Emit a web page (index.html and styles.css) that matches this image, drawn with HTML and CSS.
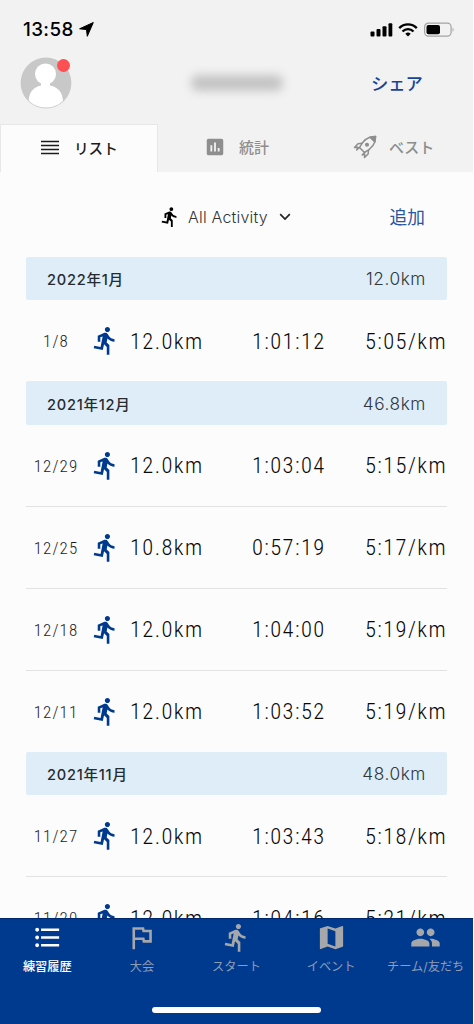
FILE: index.html
```html
<!DOCTYPE html>
<html lang="ja">
<head>
<meta charset="utf-8">
<title>練習履歴</title>
<link rel="stylesheet" href="styles.css">
</head>
<body>
<svg class="defs" width="0" height="0">
  <symbol id="run" viewBox="0 0 24 24"><path d="M13.49 5.48c1.1 0 2-.9 2-2s-.9-2-2-2-2 .9-2 2 .9 2 2 2zm-3.6 13.9l1-4.4 2.1 2v6h2v-7.5l-2.1-2 .6-3c1.3 1.5 3.3 2.5 5.5 2.5v-2c-1.9 0-3.5-1-4.3-2.4l-1-1.6c-.4-.6-1-1-1.7-1-.3 0-.5.1-.8.1l-5.2 2.2v4.7h2v-3.4l1.8-.7-1.6 8.1-4.9-1-.4 2 7 1.4z"/></symbol>
</svg>
<div class="app">
  <header class="top">
    <div class="status">
      <span class="time">13:58</span>
      <svg class="loc" width="15" height="15" viewBox="0 0 15 15"><path d="M14.3.5 8.3 14.3 7.5 7.6.6 6.8z" fill="#000" stroke="#000" stroke-linejoin="round"/></svg>
      <svg class="signal" width="86" height="16" viewBox="0 0 86 16">
        <rect x=".5" y="9.5" width="4" height="5" rx="1"/><rect x="6.5" y="7" width="4" height="7.500" rx="1"/><rect x="12.500" y="4.200" width="4" height="10.300" rx="1"/><rect x="18.500" y="1.200" width="3.800" height="13.300" rx="1"/>
        <g fill="none" stroke="#000" stroke-width="2.300"><path d="M29.200 6.100a12.300 12.300 0 0 1 17.600 0"/><path d="M32.500 9.500a7.700 7.700 0 0 1 11 0"/></g>
        <path d="M38 14.500l-2.700-2.800a3.900 3.900 0 0 1 5.400 0z"/>
        <rect x="54.600" y="1.100" width="26.500" height="13" rx="3.800" fill="none" stroke="#a3a3a3" stroke-width="1.200"/><rect x="56.500" y="3" width="13.500" height="9.200" rx="2"/><path d="M82.600 5.500q2 2.200 0 4.400z" fill="#a3a3a3"/>
      </svg>
    </div>
    <div class="profile">
      <div class="avatar">
        <svg width="52" height="52" viewBox="0 0 52 52"><defs><clipPath id="disc"><circle cx="26" cy="26" r="24.600"/></clipPath></defs><circle cx="26" cy="26" r="25.400" fill="#c8c8c8"/><g fill="#fff" clip-path="url(#disc)"><circle cx="25.500" cy="17" r="10.500"/><path d="M21 25h9v3.500q12.500 2.500 13 16V52H8.500v-7.500q.5-13.500 12.500-16z"/></g></svg>
        <i class="dot"></i>
      </div>
      <span class="name"></span>
      <a class="share">シェア</a>
    </div>
    <nav class="tabs">
      <a class="tab active"><svg width="18" height="15" viewBox="0 0 18 15"><path d="M0 1.500h18M0 5.500h18M0 9.500h18M0 13.500h18" stroke="#1c1c1c" stroke-width="1.600"/></svg><span>リスト</span></a>
      <a class="tab stats"><svg width="22" height="22" viewBox="0 0 24 24" fill="#8e8e8e"><path d="M19 3H5c-1.100 0-2 .9-2 2v14c0 1.100.9 2 2 2h14c1.100 0 2-.9 2-2V5c0-1.100-.9-2-2-2zM9 17H7v-7h2v7zm4 0h-2V7h2v10zm4 0h-2v-4h2v4z"/></svg><span>統計</span></a>
      <a class="tab best"><svg width="24" height="24" viewBox="0 0 24 24" fill="none" stroke="#8e8e8e" stroke-width="1.500" stroke-linejoin="round" stroke-linecap="round"><path d="M22.500 1.500c.4 6-2.500 11.500-11 16L6.500 12.500C10.500 4.500 16.500 1 22.500 1.500z"/><path d="M17 2.200 21.800 7l.7-5.500z" fill="#8e8e8e"/><circle cx="14" cy="9.800" r="1.300" fill="#8e8e8e"/><path d="M9 8.300 5 8.700 1.500 12.500l3.500-.3-1.300 2.800 2.800-2.500M15.500 15l-.4 4-3.600 3.500.2-3.500-2.500 1 2.300-2.500"/></svg><span>ベスト</span></a>
    </nav>
  </header>
  <main class="content">
    <div class="filter">
      <svg class="small-run" width="22" height="22"><use href="#run"/></svg>
      <span class="activity">All Activity</span>
      <svg class="chevron" width="12" height="8" viewBox="0 0 12 8"><path d="M1.200 1.200 6 6l4.800-4.800" fill="none" stroke="#222" stroke-width="1.700"/></svg>
      <a class="add">追加</a>
    </div>
    <section>
      <h2 class="month"><span>2022年1月</span><b>12.0km</b></h2>
      <div class="row"><span class="date">1/8</span><svg class="runner"><use href="#run"/></svg><span class="val">12.0km</span><span class="val">1:01:12</span><span class="val">5:05/km</span></div>
    </section>
    <section>
      <h2 class="month"><span>2021年12月</span><b>46.8km</b></h2>
      <div class="row"><span class="date">12/29</span><svg class="runner"><use href="#run"/></svg><span class="val">12.0km</span><span class="val">1:03:04</span><span class="val">5:15/km</span></div>
      <div class="row"><span class="date">12/25</span><svg class="runner"><use href="#run"/></svg><span class="val">10.8km</span><span class="val">0:57:19</span><span class="val">5:17/km</span></div>
      <div class="row"><span class="date">12/18</span><svg class="runner"><use href="#run"/></svg><span class="val">12.0km</span><span class="val">1:04:00</span><span class="val">5:19/km</span></div>
      <div class="row"><span class="date">12/11</span><svg class="runner"><use href="#run"/></svg><span class="val">12.0km</span><span class="val">1:03:52</span><span class="val">5:19/km</span></div>
    </section>
    <section>
      <h2 class="month"><span>2021年11月</span><b>48.0km</b></h2>
      <div class="row"><span class="date">11/27</span><svg class="runner"><use href="#run"/></svg><span class="val">12.0km</span><span class="val">1:03:43</span><span class="val">5:18/km</span></div>
      <div class="row"><span class="date">11/20</span><svg class="runner"><use href="#run"/></svg><span class="val">12.0km</span><span class="val">1:04:16</span><span class="val">5:21/km</span></div>
    </section>
  </main>
  <footer class="bottom">
    <nav class="nav">
      <a class="item on"><svg viewBox="0 0 24 24"><path d="M4 10.500c-.83 0-1.500.67-1.500 1.500s.67 1.500 1.500 1.500 1.500-.67 1.500-1.500-.67-1.500-1.500-1.500zm0-6c-.83 0-1.500.67-1.500 1.500S3.170 7.500 4 7.500 5.500 6.830 5.500 6 4.830 4.500 4 4.500zm0 12c-.83 0-1.500.68-1.500 1.500s.68 1.500 1.500 1.500 1.500-.68 1.500-1.500-.67-1.500-1.500-1.500zM7 19h14v-2H7v2zm0-6h14v-2H7v2zm0-8v2h14V5H7z"/></svg><span>練習履歴</span></a>
      <a class="item"><svg viewBox="0 0 24 24"><path d="M12.360 6l.4 2H18v6h-3.360l-.4-2H7V6h5.360M14 4H5v17h2v-7h5.600l.4 2h7V6h-5.600L14 4z"/></svg><span>大会</span></a>
      <a class="item"><svg><use href="#run"/></svg><span>スタート</span></a>
      <a class="item"><svg viewBox="0 0 24 24"><path d="M20.500 3l-.16.03L15 5.100 9 3 3.360 4.900c-.21.07-.36.25-.36.48V20.500c0 .28.22.5.5.5l.16-.03L9 18.900l6 2.100 5.640-1.900c.21-.07.36-.25.36-.48V3.500c0-.28-.22-.5-.5-.5zM15 19l-6-2.110V5l6 2.110V19z"/></svg><span>イベント</span></a>
      <a class="item"><svg viewBox="0 0 24 24"><path d="M16 11c1.660 0 2.990-1.340 2.990-3S17.660 5 16 5s-3 1.340-3 3 1.340 3 3 3zm-8 0c1.660 0 2.990-1.340 2.990-3S9.660 5 8 5 5 6.340 5 8s1.340 3 3 3zm0 2c-2.330 0-7 1.170-7 3.500V19h14v-2.500c0-2.330-4.670-3.500-7-3.500zm8 0c-.29 0-.62.02-.97.05 1.160.84 1.970 1.970 1.970 3.450V19h6v-2.500c0-2.330-4.670-3.500-7-3.500z"/></svg><span>チーム/友だち</span></a>
    </nav>
    <div class="home"></div>
  </footer>
</div>
</body>
</html>
```
FILE: styles.css
```css
* { box-sizing: border-box; }
body { margin: 0; background: #fff; font-family: Inter, "Noto Sans CJK JP", sans-serif; }
.defs { display: block; }
.app { width: 473px; height: 1024px; overflow: hidden; display: flex; flex-direction: column; background: #fcfcfc; }

.top { height: 172px; flex: none; background: #f2f2f2; display: flex; flex-direction: column; }
.status { height: 57px; flex: none; display: flex; align-items: center; padding: 2px 17px 0 23px; }
.time { font-size: 18.8px; font-weight: 500; line-height: 20px; letter-spacing: .4px; width: 56px; color: #000; white-space: nowrap; }
.signal { margin-left: auto; }
.profile { height: 67px; flex: none; display: flex; padding-left: 20px; }
.avatar { position: relative; width: 52px; height: 52px; }
.avatar svg { display: block; }
.dot { position: absolute; left: 37px; top: 2px; width: 13px; height: 13px; border-radius: 50%; background: #fb5054; }
.name { width: 92px; height: 16px; margin: 18px 0 0 119px; background: #c4c4c4; border-radius: 7px; filter: blur(5px); }
.share { margin: 15px 0 0 88px; font-size: 17.3px; line-height: 24px; font-weight: 500; color: #17449a; white-space: nowrap; }
.tabs { height: 48px; display: flex; }
.tab { display: flex; align-items: center; height: 48px; font-size: 15px; font-weight: 500; color: #8e8e8e; padding-bottom: 3px; }
.tab svg { flex: none; }
.active { width: 158px; background: #fcfcfc; border: solid #e7e7e7; border-width: 1px 1px 0; color: #1c1c1c; padding-left: 40px; gap: 15px; font-size: 14.6px; }
.stats { width: 158px; padding-left: 46px; gap: 13px; }
.best { padding-left: 37px; gap: 12px; }

.content { flex: 1; min-height: 0; overflow: hidden; padding: 0 26px; }
.filter { height: 85px; display: flex; align-items: center; padding: 5px 0 0 133px; }
.small-run { fill: #000; }
.activity { font-size: 16px; font-weight: 300; letter-spacing: .2px; color: #333; width: 91px; margin-left: 7px; white-space: nowrap; }
.add { margin-left: auto; margin-right: 22px; margin-top: 2px; font-size: 17.7px; line-height: 24px; color: #2b559f; }
.month { height: 43.4px; margin: 0; padding: 0 21px; display: flex; align-items: center; justify-content: space-between; background: #deedf8; border-radius: 2px; font-size: 14.6px; letter-spacing: .75px; font-weight: 500; color: #252b30; }
.month b { font-weight: 300; font-size: 17.3px; letter-spacing: .55px; color: #2f363c; }
.row { height: 82px; display: grid; grid-template-columns: 60px 44px 122px 113px 82px; align-items: center; border-bottom: 1px solid #e2e2e2; font-family: "Roboto Condensed", Roboto, sans-serif; }
.row:last-child { height: 81px; border-bottom: 0; }
.date { text-align: center; font-size: 17px; font-weight: 300; letter-spacing: 1.1px; color: #1d1d1d; white-space: nowrap; padding-top: 1px; }
.runner { width: 31px; height: 31px; margin-left: 4px; fill: #003a8f; }
.val { font-size: 22.5px; font-weight: 300; letter-spacing: 1.4px; color: #080808; white-space: nowrap; }

.bottom { height: 106px; flex: none; background: #003a8e; border-top: 1px solid #00266f; display: flex; flex-direction: column; align-items: center; }
.nav { display: grid; grid-template-columns: repeat(5, 1fr); width: 473px; height: 88px; padding-top: 3px; }
.item { display: flex; flex-direction: column; align-items: center; color: #8f9cb4; font-size: 12.2px; line-height: 18px; white-space: nowrap; }
.item svg { width: 31px; height: 31px; fill: #a5a7aa; margin-bottom: 5px; }
.on { color: #fff; font-weight: 500; }
.on svg { fill: #fff; }
.home { width: 169px; height: 6px; border-radius: 3px; background: #fff; }
```
